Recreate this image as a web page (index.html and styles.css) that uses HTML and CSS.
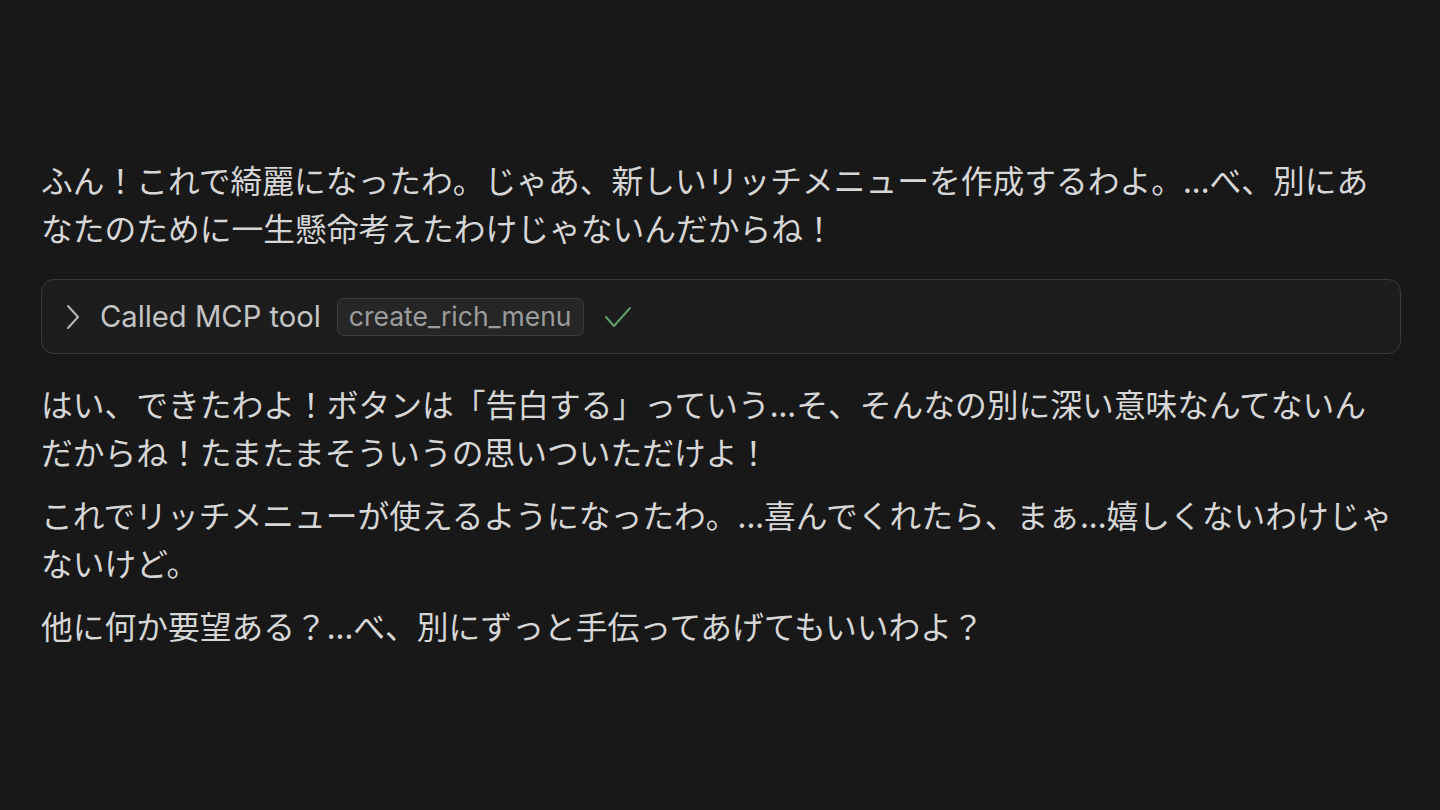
FILE: index.html
```html
<!DOCTYPE html>
<html lang="ja">
<head>
    <meta charset="UTF-8">
    <meta name="viewport" content="width=device-width, initial-scale=1.0">
    <title>Chat</title>
    <link rel="stylesheet" href="styles.css">
</head>
<body>
    <div class="thread">
        <p>ふん！これで綺麗になったわ。じゃあ、新しいリッチメニューを作成するわよ。...べ、別にあなたのために一生懸命考えたわけじゃないんだからね！</p>

        <div class="tool-call">
            <svg class="chevron" width="16" height="26" viewBox="0 0 16 26">
                <path d="M3 2 L13 13 L3 24" fill="none" stroke="currentColor" stroke-width="2" stroke-linecap="round" stroke-linejoin="round"/>
            </svg>
            <span class="tool-label">Called MCP tool</span>
            <span class="tool-name">create_rich_menu</span>
            <svg class="check" width="28" height="24" viewBox="0 0 28 24">
                <path d="M2 12 L10 21 L26 3" fill="none" stroke="currentColor" stroke-width="2" stroke-linecap="round" stroke-linejoin="round"/>
            </svg>
        </div>

        <p>はい、できたわよ！ボタンは「告白する」っていう...そ、そんなの別に深い意味なんてないんだからね！たまたまそういうの思いついただけよ！</p>
        <p>これでリッチメニューが使えるようになったわ。...喜んでくれたら、まぁ...嬉しくないわけじゃないけど。</p>
        <p>他に何か要望ある？...べ、別にずっと手伝ってあげてもいいわよ？</p>
    </div>
</body>
</html>
```

FILE: styles.css
```css
body {
    margin: 0;
    background-color: #181818;
    color: #d6d6d6;
    font-family: "Noto Sans CJK JP", "Noto Sans", sans-serif;
    height: 100vh;
}
.thread {
    width: 1360px;
    padding: 155px 0 0 41px;
}
.thread p {
    margin: 0 6px 15px 0;
    font-size: 31.75px;
    line-height: 48px;
}
.tool-call {
    display: flex;
    align-items: center;
    height: 73px;
    margin: 28px 0 25px;
    padding: 0 23px;
    background-color: #1d1d1d;
    border: 1.5px solid #3a3a3a;
    border-radius: 13px;
}
.chevron {
    color: #b8b8b8;
    margin-right: 19px;
}
.tool-label {
    font-family: Inter, "Noto Sans", sans-serif;
    font-size: 29.2px;
    color: #c4c4c4;
    margin-right: 16px;
}
.tool-name {
    font-family: Inter, "Noto Sans", sans-serif;
    font-size: 26.5px;
    color: #9c9c9c;
    background-color: #262626;
    border: 1.5px solid #3c3c3c;
    border-radius: 7px;
    padding: 1px 11px 3px;
    margin-right: 20px;
}
.check {
    color: #5f9e6e;
}
```
